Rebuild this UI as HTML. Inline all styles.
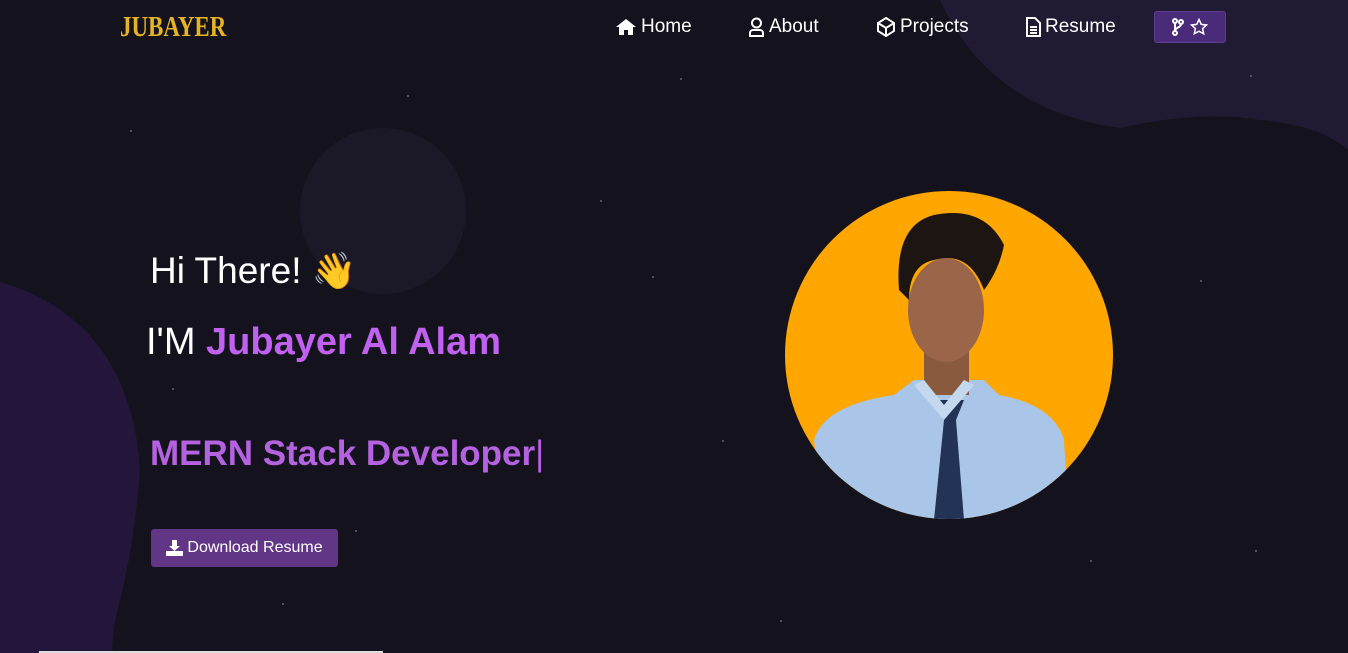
<!DOCTYPE html>
<html style="width:1348px;height:653px;overflow:hidden"><head><meta charset="utf-8"><style>
*{margin:0;padding:0;box-sizing:border-box}
body{width:1348px;height:653px;overflow:hidden;background:#14131d;font-family:"Liberation Sans",sans-serif;color:#fff;position:relative}
.blob{position:absolute;border-radius:50%}
.nav a{position:absolute;top:16px;font-size:19px;color:#fff;display:flex;align-items:center;gap:4px}
.star{position:absolute;width:2px;height:2px;background:#666;border-radius:50%}
</style></head><body>
<svg style="position:absolute;left:0;top:0" width="1348" height="653">
<path d="M0 282 Q130 320 140 470 Q135 540 120 600 Q112 630 112 653 L0 653z" fill="#23163a"/>
<path d="M940 0 Q990 110 1120 128 Q1200 110 1260 120 Q1320 125 1348 150 L1348 0z" fill="#201a33"/>
</svg>
<div class="blob" style="left:300px;top:128px;width:166px;height:166px;background:#1b1828"></div>
<div class="star" style="left:407px;top:95px"></div><div class="star" style="left:130px;top:130px"></div>
<div class="star" style="left:680px;top:78px"></div><div class="star" style="left:1250px;top:75px"></div>
<div class="star" style="left:600px;top:200px"></div><div class="star" style="left:652px;top:276px"></div>
<div class="star" style="left:1200px;top:280px"></div><div class="star" style="left:722px;top:440px"></div>
<div class="star" style="left:355px;top:530px"></div><div class="star" style="left:282px;top:603px"></div>
<div class="star" style="left:1090px;top:560px"></div><div class="star" style="left:1255px;top:550px"></div>
<div class="star" style="left:172px;top:388px"></div><div class="star" style="left:780px;top:620px"></div>
<div style="position:absolute;left:120px;top:12px;font-family:'Liberation Serif',serif;font-weight:bold;font-size:28px;color:#e6b422;transform:scaleX(0.82);transform-origin:left">JUBAYER</div>
<div class="nav">
<a style="left:615px"><svg width="22" height="18" viewBox="0 0 22 18"><path d="M11 1L1 9h3v8h5v-5h4v5h5V9h3z" fill="#fff"/></svg>Home</a>
<a style="left:748px"><svg width="17" height="20" viewBox="0 0 17 20" fill="none" stroke="#fff" stroke-width="2"><circle cx="8.5" cy="6" r="4.5"/><path d="M2 19v-3a3 3 0 0 1 3-3h7a3 3 0 0 1 3 3v3z"/></svg>About</a>
<a style="left:876px"><svg width="20" height="20" viewBox="0 0 20 20" fill="none" stroke="#fff" stroke-width="2"><path d="M10 1l8 5v8l-8 5-8-5V6z M2 6l8 5 8-5 M10 11v8"/></svg>Projects</a>
<a style="left:1025px"><svg width="16" height="20" viewBox="0 0 16 20" fill="none" stroke="#fff" stroke-width="2"><path d="M2 1h8l5 5v13H2z M5 10h7 M5 13h7 M5 16h7"/></svg>Resume</a>
</div>
<div style="position:absolute;left:1154px;top:11px;width:72px;height:32px;background:#4a2b7a;border:1px solid #5e3c90;border-radius:3px;display:flex;align-items:center;justify-content:center;gap:6px">
<svg width="12" height="18" viewBox="0 0 12 18" fill="none" stroke="#fff" stroke-width="2"><circle cx="3" cy="3" r="2"/><circle cx="3" cy="15" r="2"/><circle cx="9" cy="4" r="2"/><path d="M3 5v8 M9 6c0 4-6 3-6 7"/></svg>
<svg width="18" height="18" viewBox="0 0 24 24" fill="none" stroke="#fff" stroke-width="2"><path d="M12 2l3 6.5 7 .8-5.2 4.8 1.4 7L12 17.6 5.8 21l1.4-7L2 9.3l7-.8z"/></svg>
</div>
<div style="position:absolute;left:150px;top:250px;font-size:37px">Hi There! <span style="font-size:36px">👋</span></div>
<div style="position:absolute;left:146px;top:321px;font-size:38px">I'M <span style="color:#c061ef;font-weight:bold">Jubayer Al Alam</span></div>
<div style="position:absolute;left:150px;top:434px;font-size:35px;font-weight:bold;color:#b562e0">MERN Stack Developer<span style="font-weight:normal">|</span></div>
<div style="position:absolute;left:151px;top:529px;width:187px;height:38px;background:#623686;border-radius:3px;font-size:16px;display:flex;align-items:center;justify-content:center;gap:4px">
<svg width="17" height="16" viewBox="0 0 17 16"><path d="M6 0h5v6h3l-5.5 5L3 6h3z M0 11h17v5H0z" fill="#fff"/></svg>Download Resume</div>
<svg style="position:absolute;left:784px;top:190px" width="330" height="330" viewBox="0 0 330 330">
<defs><clipPath id="c"><circle cx="165" cy="165" r="164"/></clipPath></defs>
<circle cx="165" cy="165" r="164" fill="#ffa600"/>
<g clip-path="url(#c)">
<path d="M40 330 L30 250 Q40 215 110 205 L130 190 L200 190 L215 205 Q270 215 280 250 L285 330z" fill="#a9c6e8"/>
<path d="M145 210 L160 230 L150 330 L180 330 L172 230 L180 210 z" fill="#233355"/>
<rect x="140" y="150" width="45" height="55" fill="#8a5a3e"/>
<ellipse cx="162" cy="120" rx="38" ry="52" fill="#9a6548"/>
<path d="M115 100 Q110 35 150 25 Q200 15 220 55 Q215 80 200 100 Q185 60 150 70 Q125 75 125 110z" fill="#1c1512"/>
<path d="M130 195 L160 230 L190 195 L180 190 L160 215 L140 190z" fill="#c4d8ee"/>
</g></svg>
<div style="position:absolute;left:39px;top:651px;width:344px;height:2px;background:#ddd"></div>
</body></html>
